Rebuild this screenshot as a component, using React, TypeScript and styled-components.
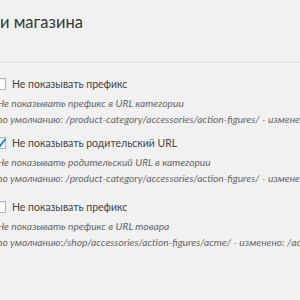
import React from "react";
import styled, { createGlobalStyle } from "styled-components";

const GlobalStyle = createGlobalStyle`
  html, body {
    margin: 0;
    padding: 0;
    background: #f1f1f1;
    overflow: hidden;
  }
  body {
    font-family: Lato, "Open Sans", sans-serif;
    color: #444;
  }
`;

const Page = styled.div`
  width: 300px;
  height: 300px;
  overflow: hidden;
`;

const Title = styled.h2`
  margin: 0;
  padding: 11px 0 0 0;
  font-size: 16.5px;
  font-weight: 400;
  line-height: 22px;
  color: #32373c;
`;

const Divider = styled.hr`
  margin: 29px 0 0 0;
  border: 0;
  border-top: 1px solid #dcdcdc;
  border-bottom: 1px solid #fafafa;
`;

const Options = styled.div`
  display: flex;
  flex-direction: column;
`;

const Option = styled.div<{ $top: number }>`
  display: flex;
  flex-direction: column;
  padding-top: ${(p) => p.$top}px;
`;

const Label = styled.label`
  display: flex;
  align-items: center;
  gap: 6px;
  height: 14px;
  font-size: 10.5px;
  white-space: nowrap;
`;

const Box = styled.span`
  position: relative;
  flex: none;
  width: 12px;
  height: 12px;
  margin-left: -6px;
  box-sizing: border-box;
  background: #fff;
  border: 1px solid #b4b9be;
  box-shadow: inset 0 1px 2px rgba(0, 0, 0, 0.1);
`;

const Check = styled.svg`
  position: absolute;
  left: -1px;
  top: -2px;
`;

const DescBlock = styled.div`
  margin: 5px 0 0 -3px;
`;

const Desc = styled.p`
  margin: 0;
  font-size: 10.2px;
  font-style: italic;
  line-height: 15.5px;
  color: #666;
  white-space: nowrap;
`;

type Item = {
  top: number;
  label: string;
  checked?: boolean;
  lines: string[];
};

const items: Item[] = [
  {
    top: 13,
    label: "Не показывать префикс",
    lines: [
      "Не показывать префикс в URL категории",
      "по умолчанию: /product-category/accessories/action-figures/ - изменено: /accessories/action-figures/",
    ],
  },
  {
    top: 9,
    label: "Не показывать родительский URL",
    checked: true,
    lines: [
      "Не показывать родительский URL в категории",
      "по умолчанию: /product-category/accessories/action-figures/ - изменено: /product-category/action-figures/",
    ],
  },
  {
    top: 14,
    label: "Не показывать префикс",
    lines: [
      "Не показывать префикс в URL товара",
      "по умолчанию:/shop/accessories/action-figures/acme/ - изменено: /accessories/action-figures/acme/",
    ],
  },
];

const App: React.FC = () => {
  return (
    <Page>
      <GlobalStyle />
      <Title>и магазина</Title>
      <Divider />
      <Options>
        {items.map((it, i) => (
          <Option key={i} $top={it.top}>
            <Label>
              <Box>
                {it.checked && (
                  <Check width="14" height="14" viewBox="0 0 14 14">
                    <path
                      d="M2.5 7.5 L5.5 10.5 L11.5 3"
                      fill="none"
                      stroke="#1e8cbe"
                      strokeWidth="2"
                    />
                  </Check>
                )}
              </Box>
              {it.label}
            </Label>
            <DescBlock>
              {it.lines.map((l, j) => (
                <Desc key={j}>{l}</Desc>
              ))}
            </DescBlock>
          </Option>
        ))}
      </Options>
    </Page>
  );
};

export default App;
